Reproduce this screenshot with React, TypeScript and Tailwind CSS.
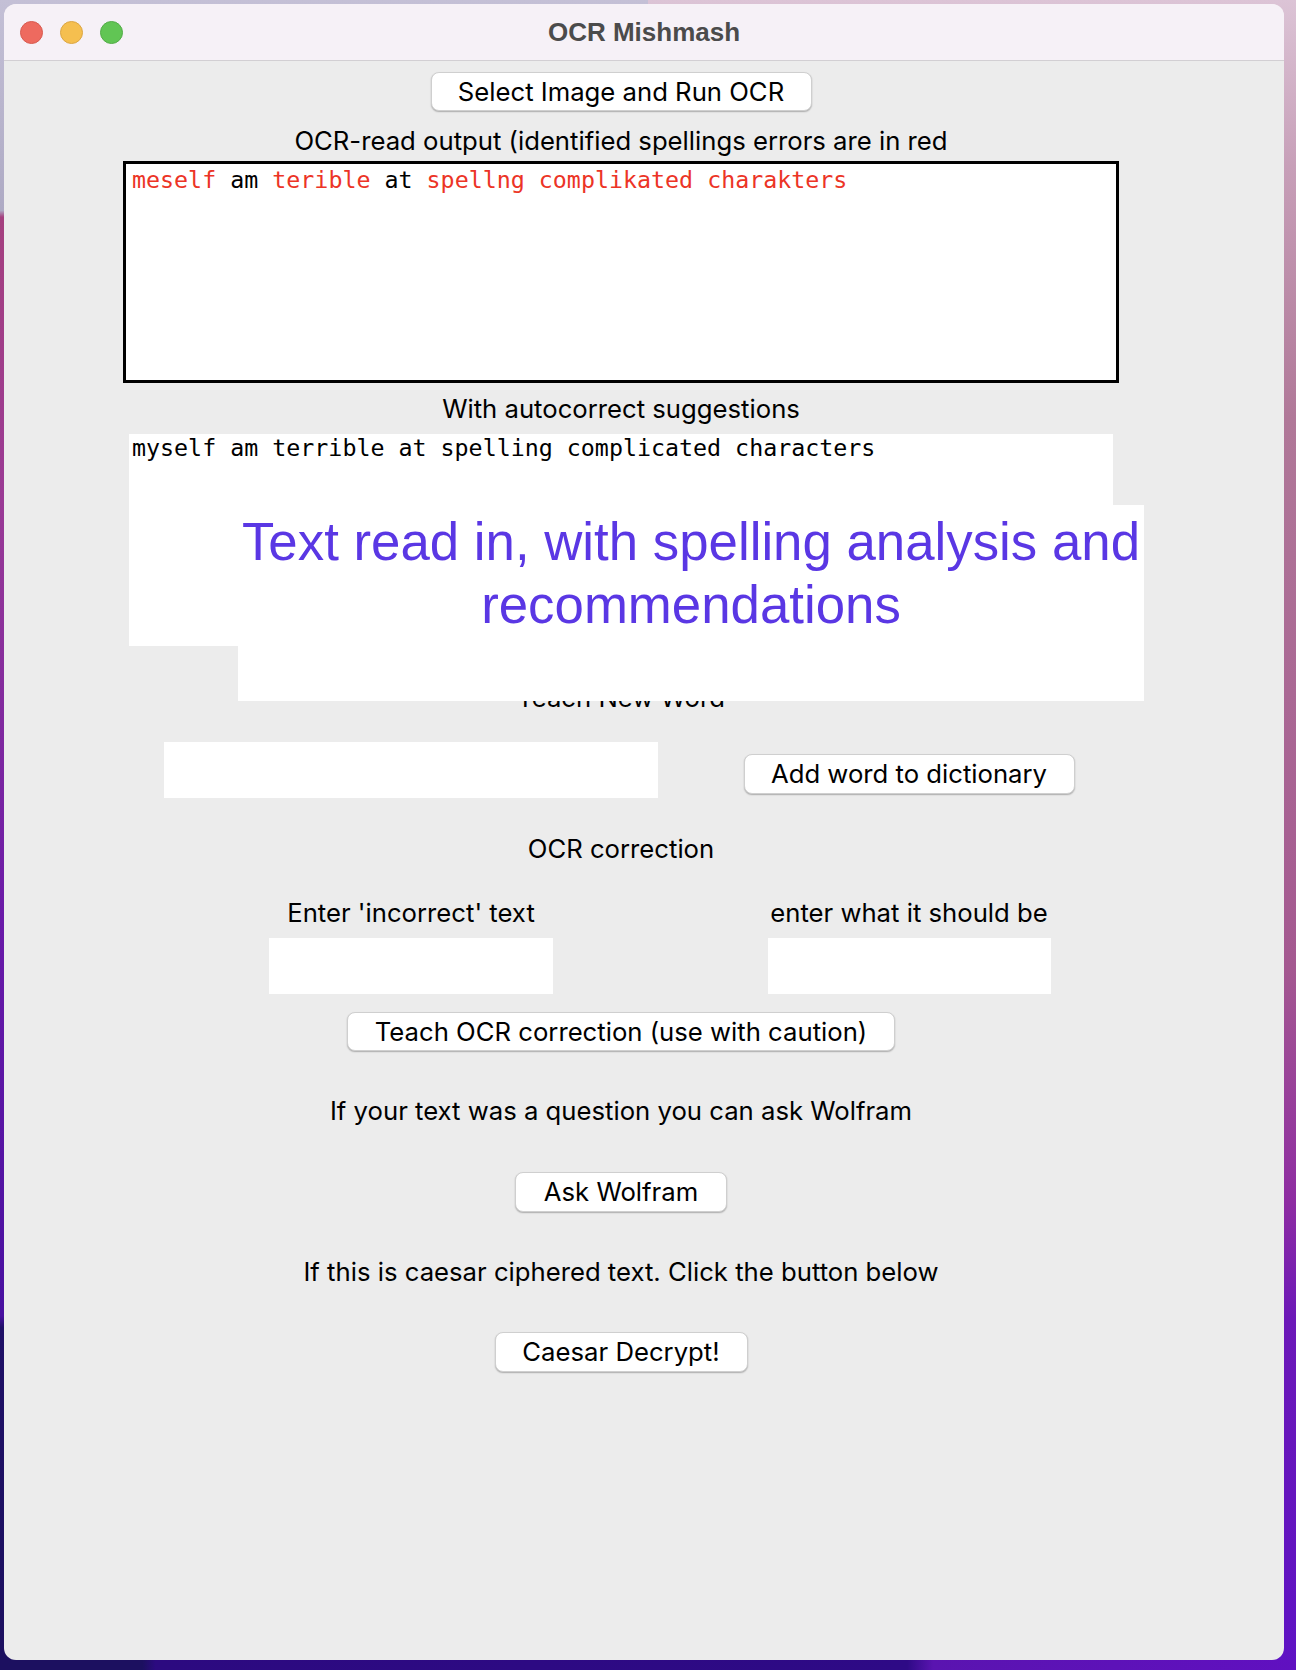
import React from "react";

const sans = "font-['Inter','Liberation_Sans',sans-serif]";
const mono = "font-['DejaVu_Sans_Mono','Liberation_Mono',monospace]";
const label = "text-[25.7px] leading-[30px] text-black whitespace-nowrap";
const btn =
  "h-[39px] rounded-[8px] bg-white text-[25.7px] leading-none text-black border-[0.5px] border-[#cfcfcf] shadow-[0_1px_1.5px_rgba(0,0,0,0.28)]";

function App() {
  const typed = [
    { w: "meself", bad: true },
    { w: "am", bad: false },
    { w: "terible", bad: true },
    { w: "at", bad: false },
    { w: "spellng", bad: true },
    { w: "complikated", bad: true },
    { w: "charakters", bad: true },
  ];

  return (
    <div className="w-[1296px] h-[1670px] pt-[4px] pl-[4px] [background:linear-gradient(to_right,#1c1060_0%,#1c1060_11%,#2c0a80_12%,#2e0a86_70%,#5a14b0_72%,#6010c0_100%)_left_bottom/100%_10px_no-repeat,linear-gradient(to_bottom,#c4c0d6_0%,#aeaac4_12.6%,#a5407f_13%,#9a3a95_30%,#6a1aa8_55%,#4810a0_78.8%,#1f1066_79.5%,#1c1060_100%)_left_top/50%_100%_no-repeat,linear-gradient(to_bottom,#dcc4d6_0%,#c79fb8_10%,#b07898_25%,#a45890_58%,#8e2ca2_72%,#6c18b8_79%,#5e12c4_100%)_right_top/50%_100%_no-repeat]">
      <div
        className={`w-[1280px] h-[1656px] rounded-[12px] overflow-hidden bg-[#ececec] flex flex-col ${sans}`}
      >
        {/* title bar */}
        <div className="h-[57px] shrink-0 grid grid-cols-[1fr_auto_1fr] items-center bg-[#f6f1f7] border-b border-[#d2cfd3]">
          <div className="flex items-center gap-[17px] pl-[16px]">
            <span className="w-[23px] h-[23px] rounded-full bg-[#ee6a5f] border border-[#d85a4f]" />
            <span className="w-[23px] h-[23px] rounded-full bg-[#f5bf4f] border border-[#dca642]" />
            <span className="w-[23px] h-[23px] rounded-full bg-[#61c554] border border-[#52ac47]" />
          </div>
          <span className="text-[26px] font-bold text-[#4b4b4b] font-['Liberation_Sans',sans-serif]">
            OCR Mishmash
          </span>
          <div />
        </div>

        {/* body */}
        <div className="relative w-[1234px] flex flex-col items-center">
          <button className={`${btn} w-[381px] mt-[11px]`}>Select Image and Run OCR</button>

          <p className={`${label} mt-[15px]`}>
            OCR-read output (identified spellings errors are in red
          </p>
          <div
            className={`w-[996px] h-[222px] mt-[5px] bg-white border-[3px] border-black pl-[6px] pt-[2px] text-[23.3px] leading-[28px] ${mono}`}
          >
            {typed.map((t, i) => (
              <span key={i} className={t.bad ? "text-[#ec3426]" : "text-black"}>
                {t.w}
                {i < typed.length - 1 ? " " : ""}
              </span>
            ))}
          </div>

          <p className={`${label} mt-[11px]`}>With autocorrect suggestions</p>
          <div
            className={`w-[984px] h-[212px] mt-[10px] bg-white pl-[3px] pt-[0px] text-[23.3px] leading-[28px] text-black ${mono}`}
          >
            myself am terrible at spelling complicated characters
          </div>

          <p className={`${label} mt-[37px]`}>Teach New Word</p>

          <div className="flex mt-[29px]">
            <div className="w-[576px] flex justify-center">
              <div className="w-[494px] h-[56px] bg-white" />
            </div>
            <div className="w-[420px] flex justify-center">
              <button className={`${btn} w-[331px] h-[40px] mt-[12px]`}>Add word to dictionary</button>
            </div>
          </div>

          <p className={`${label} mt-[36px]`}>OCR correction</p>

          <div className="flex mt-[34px]">
            <div className="w-[576px] flex flex-col items-center gap-[10px]">
              <p className={label}>Enter 'incorrect' text</p>
              <div className="w-[284px] h-[56px] bg-white" />
            </div>
            <div className="w-[420px] flex flex-col items-center gap-[10px]">
              <p className={label}>enter what it should be</p>
              <div className="w-[283px] h-[56px] bg-white" />
            </div>
          </div>

          <button className={`${btn} w-[548px] mt-[18px]`}>Teach OCR correction (use with caution)</button>

          <p className={`${label} mt-[45px]`}>If your text was a question you can ask Wolfram</p>
          <button className={`${btn} w-[212px] h-[40px] mt-[46px]`}>Ask Wolfram</button>

          <p className={`${label} mt-[45px]`}>If this is caesar ciphered text. Click the button below</p>
          <button className={`${btn} w-[253px] h-[40px] mt-[45px]`}>Caesar Decrypt!</button>

          {/* annotation laid over the output */}
          <div className="absolute left-[234px] top-[444px] w-[906px] h-[196px] bg-white pt-[5px] flex flex-col items-center text-[52.8px] leading-[63px] text-[#5a37e4] whitespace-nowrap font-['Liberation_Sans',Arial,sans-serif]">
            <span>Text read in, with spelling analysis and</span>
            <span>recommendations</span>
          </div>
        </div>
      </div>
    </div>
  );
}

export default App;
